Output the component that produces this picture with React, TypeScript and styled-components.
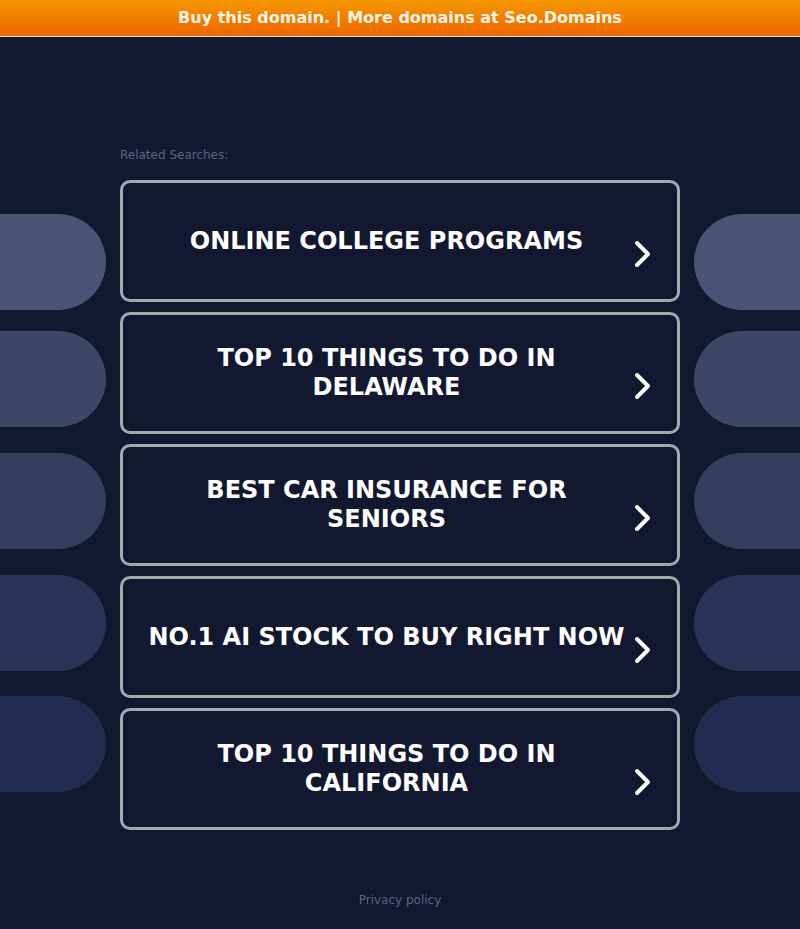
import type { ReactElement } from "react";
import styled, { createGlobalStyle } from "styled-components";

const GlobalStyle = createGlobalStyle`
  html, body {
    margin: 0;
    padding: 0;
    background: #111830;
    font-family: "DejaVu Sans", sans-serif;
  }
`;

const Page = styled.div`
  min-height: 929px;
  background: #111830;
  display: flex;
  flex-direction: column;
  overflow: hidden;
`;

const TopBar = styled.a`
  display: block;
  height: 36px;
  line-height: 35px;
  text-align: center;
  background: linear-gradient(to bottom, #f59800, #ef6600);
  border-bottom: 1px solid #e8d6c8;
  color: #fff6ea;
  font-weight: bold;
  font-size: 16px;
  text-decoration: none;
`;

const Body = styled.div`
  display: flex;
  justify-content: space-between;
  padding-top: 110px;
`;

const SideColumn = styled.div`
  width: 106px;
  display: flex;
  flex-direction: column;
  padding-top: 67px;
`;

const Pill = styled.div<{ $side: "left" | "right"; $color: string; $gap: number }>`
  height: 96px;
  margin-top: ${p => p.$gap}px;
  background: ${p => p.$color};
  border-radius: ${p => (p.$side === "left" ? "0 48px 48px 0" : "48px 0 0 48px")};
`;

const Center = styled.div`
  width: 560px;
  display: flex;
  flex-direction: column;
`;

const Label = styled.div`
  font-size: 12px;
  color: #5c6483;
  height: 26px;
  line-height: 16px;
  margin-bottom: 7px;
`;

const Card = styled.a`
  box-sizing: border-box;
  height: 122px;
  margin-bottom: 10px;
  border: 3px solid #a7a8ae;
  border-radius: 10px;
  display: flex;
  align-items: center;
  padding: 0 25px 0 22px;
  text-decoration: none;
`;

const CardText = styled.span`
  flex: 1;
  text-align: center;
  color: #ffffff;
  font-weight: bold;
  font-size: 24px;
  line-height: 29px;
  text-transform: uppercase;
`;

const Chevron = styled.svg`
  flex: none;
  width: 18px;
  height: 28px;
  margin-left: 6px;
  margin-top: 25px;
`;

const Footer = styled.div`
  text-align: center;
  margin-top: 53px;
  font-size: 12px;
  color: #5c6483;
`;

const searches = [
  "Online College Programs",
  "Top 10 Things to do in Delaware",
  "Best Car Insurance for Seniors",
  "No.1 AI Stock to Buy Right Now",
  "Top 10 Things to do in California",
];

const pills = [
  { color: "#4a5475", gap: 0 },
  { color: "#3e4866", gap: 21 },
  { color: "#343e5d", gap: 26 },
  { color: "#2a3457", gap: 26 },
  { color: "#222c51", gap: 25 },
];

export default function App(): ReactElement {
  return (
    <Page>
      <GlobalStyle />
      <TopBar href="#">Buy this domain. | More domains at Seo.Domains</TopBar>
      <Body>
        <SideColumn>
          {pills.map((p, i) => (
            <Pill key={i} $side="left" $color={p.color} $gap={p.gap} />
          ))}
        </SideColumn>
        <Center>
          <Label>Related Searches:</Label>
          {searches.map(s => (
            <Card href="#" key={s}>
              <CardText>{s}</CardText>
              <Chevron viewBox="0 0 18 28">
                <path
                  d="M3 3 L14 14 L3 25"
                  fill="none"
                  stroke="#ffffff"
                  strokeWidth="4"
                  strokeLinecap="round"
                  strokeLinejoin="round"
                />
              </Chevron>
            </Card>
          ))}
        </Center>
        <SideColumn>
          {pills.map((p, i) => (
            <Pill key={i} $side="right" $color={p.color} $gap={p.gap} />
          ))}
        </SideColumn>
      </Body>
      <Footer>Privacy policy</Footer>
    </Page>
  );
}
